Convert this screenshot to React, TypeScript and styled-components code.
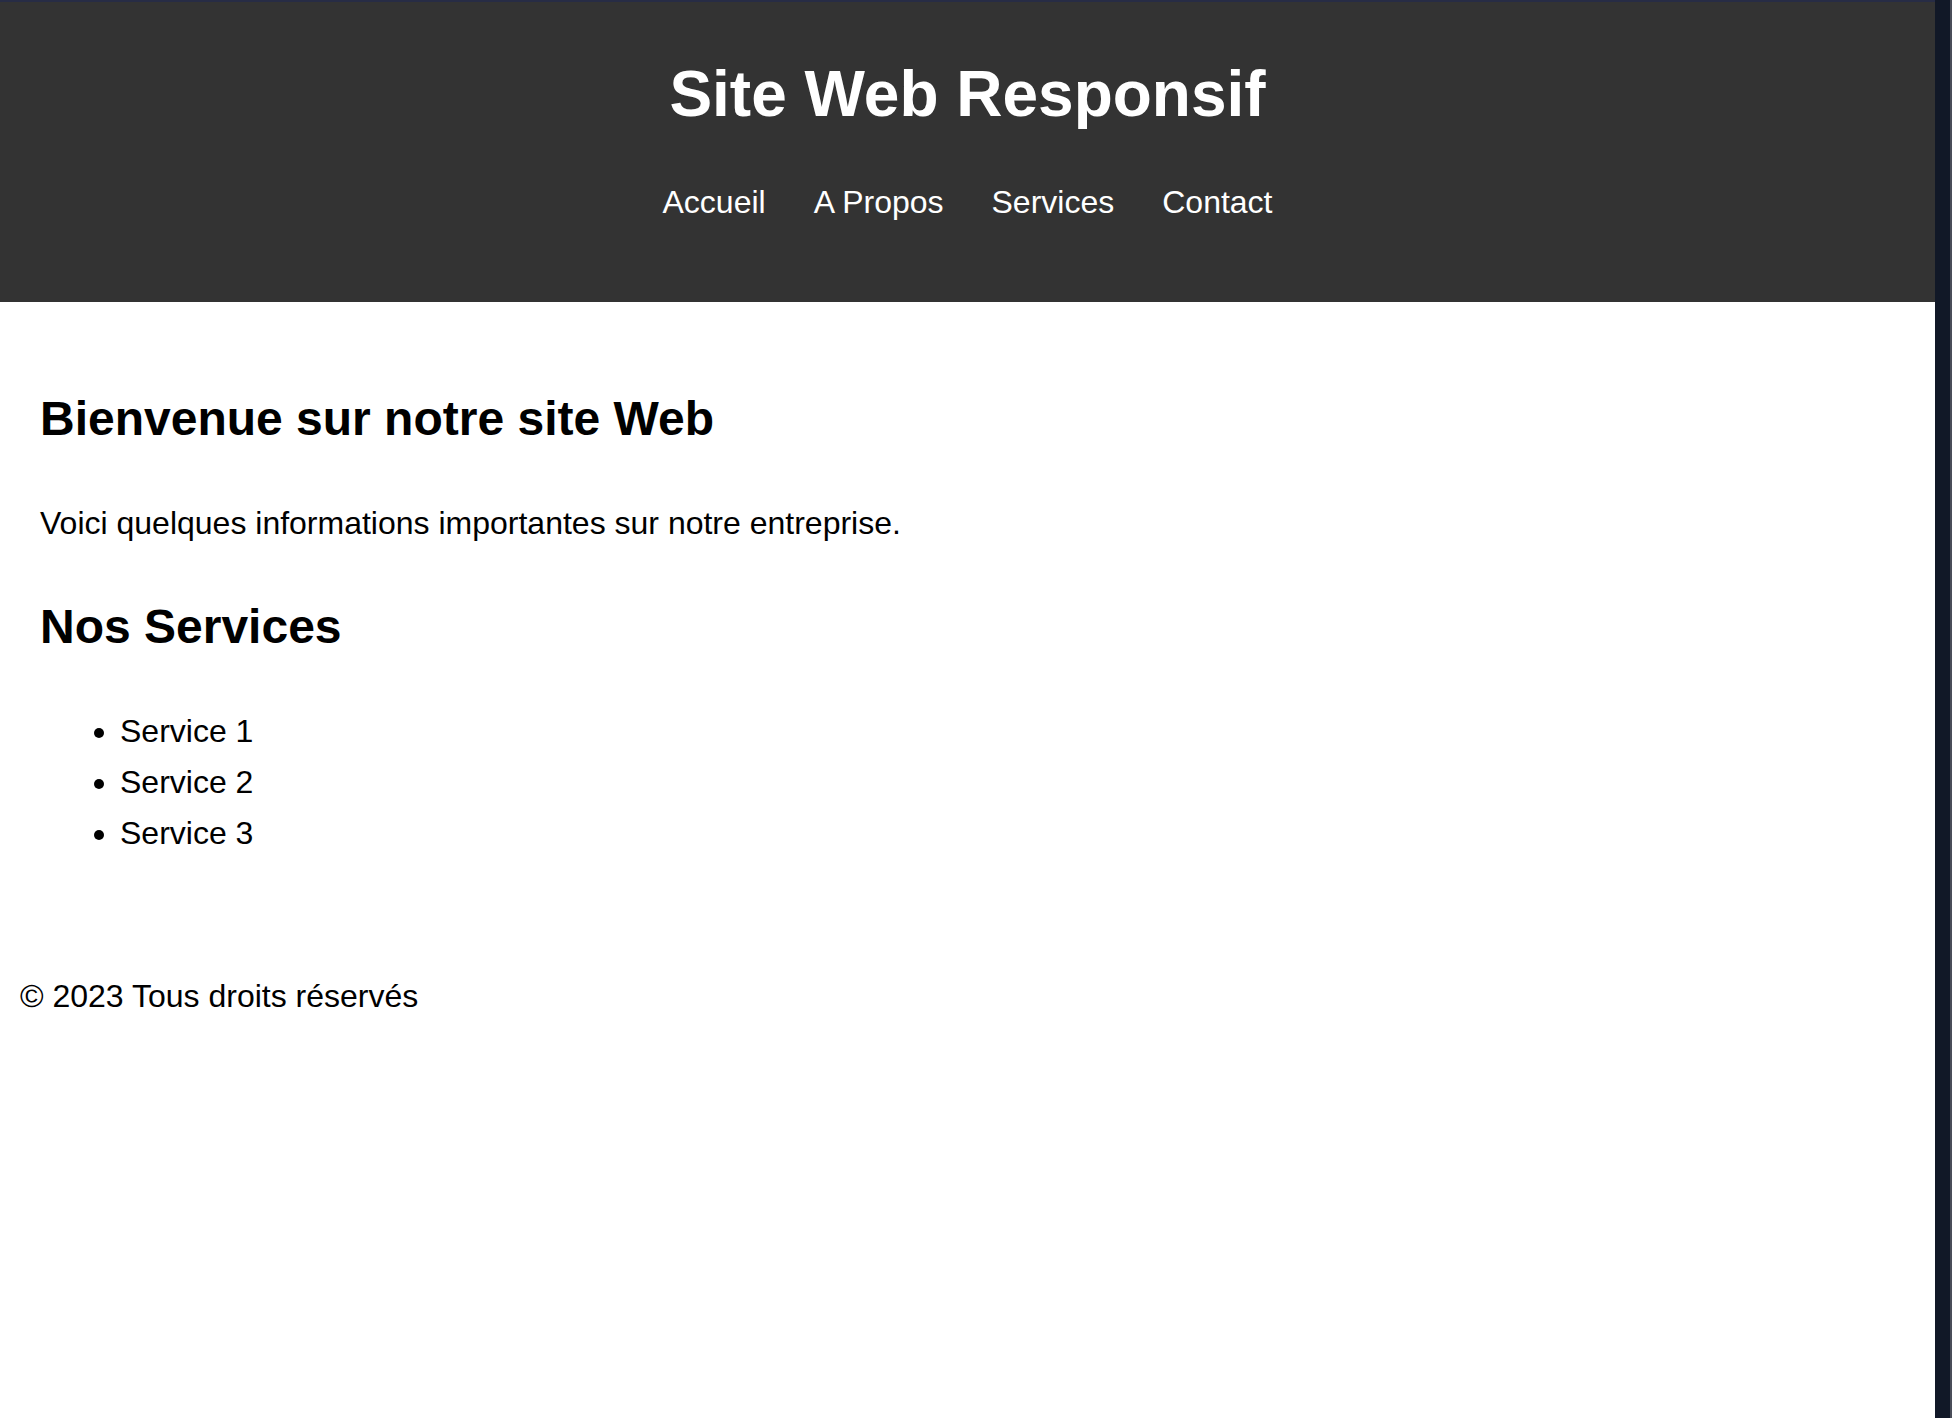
import React from "react";
import styled, { createGlobalStyle } from "styled-components";

const GlobalStyle = createGlobalStyle`
  html, body {
    margin: 0;
    padding: 0;
    background: #ffffff;
  }
  body {
    font-family: "Liberation Sans", Arial, Helvetica, sans-serif;
    font-size: 32px;
    line-height: 1.6;
    color: #000000;
  }
  * {
    box-sizing: border-box;
  }
`;

const Frame = styled.div`
  display: flex;
  min-height: 100vh;
  width: 100%;
`;

const Page = styled.div`
  flex: 1;
  display: flex;
  flex-direction: column;
  border-top: 2px solid #272c45;
  background: #ffffff;
`;

const ScrollStrip = styled.div`
  width: 17px;
  flex-shrink: 0;
  background: #111827;
  border-right: 2px solid #4a4d59;
`;

const Header = styled.header`
  background: #333333;
  color: #ffffff;
  text-align: center;
  padding: 41px 0 73px;
`;

const Title = styled.h1`
  margin: 0 0 32px;
  font-size: 64px;
  font-weight: 700;
  line-height: 1.6;
`;

const NavList = styled.ul`
  list-style: none;
  margin: 0;
  padding: 0;
  display: flex;
  justify-content: center;
  gap: 48px;
`;

const NavItem = styled.li`
  font-size: 32px;
  line-height: 1.6;
`;

const NavLink = styled.a`
  color: #ffffff;
  text-decoration: none;
`;

const Main = styled.main`
  padding: 40px;
`;

const Heading = styled.h2`
  margin: 39.8px 0;
  font-size: 48px;
  font-weight: 700;
  line-height: 1.6;
`;

const Paragraph = styled.p`
  margin: 32px 0;
`;

const ServiceList = styled.ul`
  margin: 32px 0;
  padding-left: 80px;
`;

const ServiceItem = styled.li``;

const Footer = styled.footer`
  padding: 40px 20px 20px;
`;

const navItems = ["Accueil", "A Propos", "Services", "Contact"];
const services = ["Service 1", "Service 2", "Service 3"];

export default function App() {
  return (
    <>
      <GlobalStyle />
      <Frame>
        <Page>
          <Header>
            <Title>Site Web Responsif</Title>
            <nav>
              <NavList>
                {navItems.map((item) => (
                  <NavItem key={item}>
                    <NavLink href="#">{item}</NavLink>
                  </NavItem>
                ))}
              </NavList>
            </nav>
          </Header>
          <Main>
            <Heading>Bienvenue sur notre site Web</Heading>
            <Paragraph>
              Voici quelques informations importantes sur notre entreprise.
            </Paragraph>
            <Heading>Nos Services</Heading>
            <ServiceList>
              {services.map((s) => (
                <ServiceItem key={s}>{s}</ServiceItem>
              ))}
            </ServiceList>
          </Main>
          <Footer>© 2023 Tous droits réservés</Footer>
        </Page>
        <ScrollStrip />
      </Frame>
    </>
  );
}
